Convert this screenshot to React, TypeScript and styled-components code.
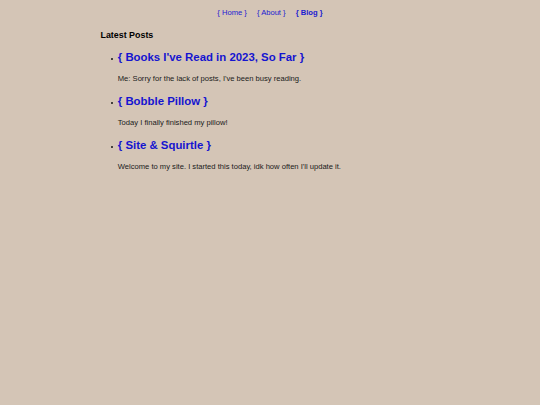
import React from "react";
import styled, { createGlobalStyle } from "styled-components";

const Global = createGlobalStyle`
  html, body {
    margin: 0;
    padding: 0;
    background: #d4c5b6;
  }
  body {
    font-family: "Liberation Sans", Arial, sans-serif;
    font-size: 7.6px;
    color: #000;
  }
`;

const Page = styled.div`
  min-height: 405px;
  background: #d4c5b6;
`;

const Nav = styled.nav`
  display: flex;
  justify-content: center;
  gap: 10px;
  padding-top: 8.3px;
  line-height: 10px;
  font-size: 7.6px;
`;

const NavLink = styled.a<{ $active?: boolean }>`
  color: #1a1ad2;
  text-decoration: none;
  font-weight: ${(p) => (p.$active ? "bold" : "normal")};
  white-space: pre;
`;

const Main = styled.main`
  width: 339px;
  margin: 0 auto;
`;

const Heading = styled.h3`
  margin: 11.5px 0 0;
  font-size: 8.9px;
  line-height: 10px;
  font-weight: bold;
`;

const PostList = styled.ul`
  margin: 10.2px 0 0;
  padding-left: 10.3px;
  list-style: none;
`;

const Post = styled.li`
  display: grid;
  grid-template-columns: 7px 1fr;
  font-size: 7.6px;
  & + & {
    margin-top: 10.8px;
  }
`;

const Bullet = styled.span`
  grid-row: 1;
  grid-column: 1;
  width: 1.8px;
  height: 1.8px;
  margin-top: 8px;
  border-radius: 50%;
  background: #1a1a1a;
`;

const Title = styled.h2`
  grid-column: 2;
  grid-row: 1;
  margin: 0;
  font-size: 11.4px;
  line-height: 14px;
  font-weight: bold;
`;

const TitleLink = styled.a`
  color: #1414d0;
  text-decoration: none;
`;

const Summary = styled.p`
  grid-column: 2;
  grid-row: 2;
  margin: 10.2px 0 0;
  font-size: 7.6px;
  line-height: 9px;
  color: #1a1a1a;
`;

const posts = [
  { title: "{ Books I've Read in 2023, So Far }", summary: "Me: Sorry for the lack of posts, I've been busy reading." },
  { title: "{ Bobble Pillow }", summary: "Today I finally finished my pillow!" },
  { title: "{ Site & Squirtle }", summary: "Welcome to my site. I started this today, idk how often I'll update it." },
];

export default function App() {
  return (
    <Page>
      <Global />
      <Nav>
        <NavLink href="#">{"{ Home }"}</NavLink>
        <NavLink href="#">{"{ About }"}</NavLink>
        <NavLink href="#" $active>{"{ Blog }"}</NavLink>
      </Nav>
      <Main>
        <Heading>Latest Posts</Heading>
        <PostList>
          {posts.map((p) => (
            <Post key={p.title}>
              <Bullet />
              <Title>
                <TitleLink href="#">{p.title}</TitleLink>
              </Title>
              <Summary>{p.summary}</Summary>
            </Post>
          ))}
        </PostList>
      </Main>
    </Page>
  );
}
